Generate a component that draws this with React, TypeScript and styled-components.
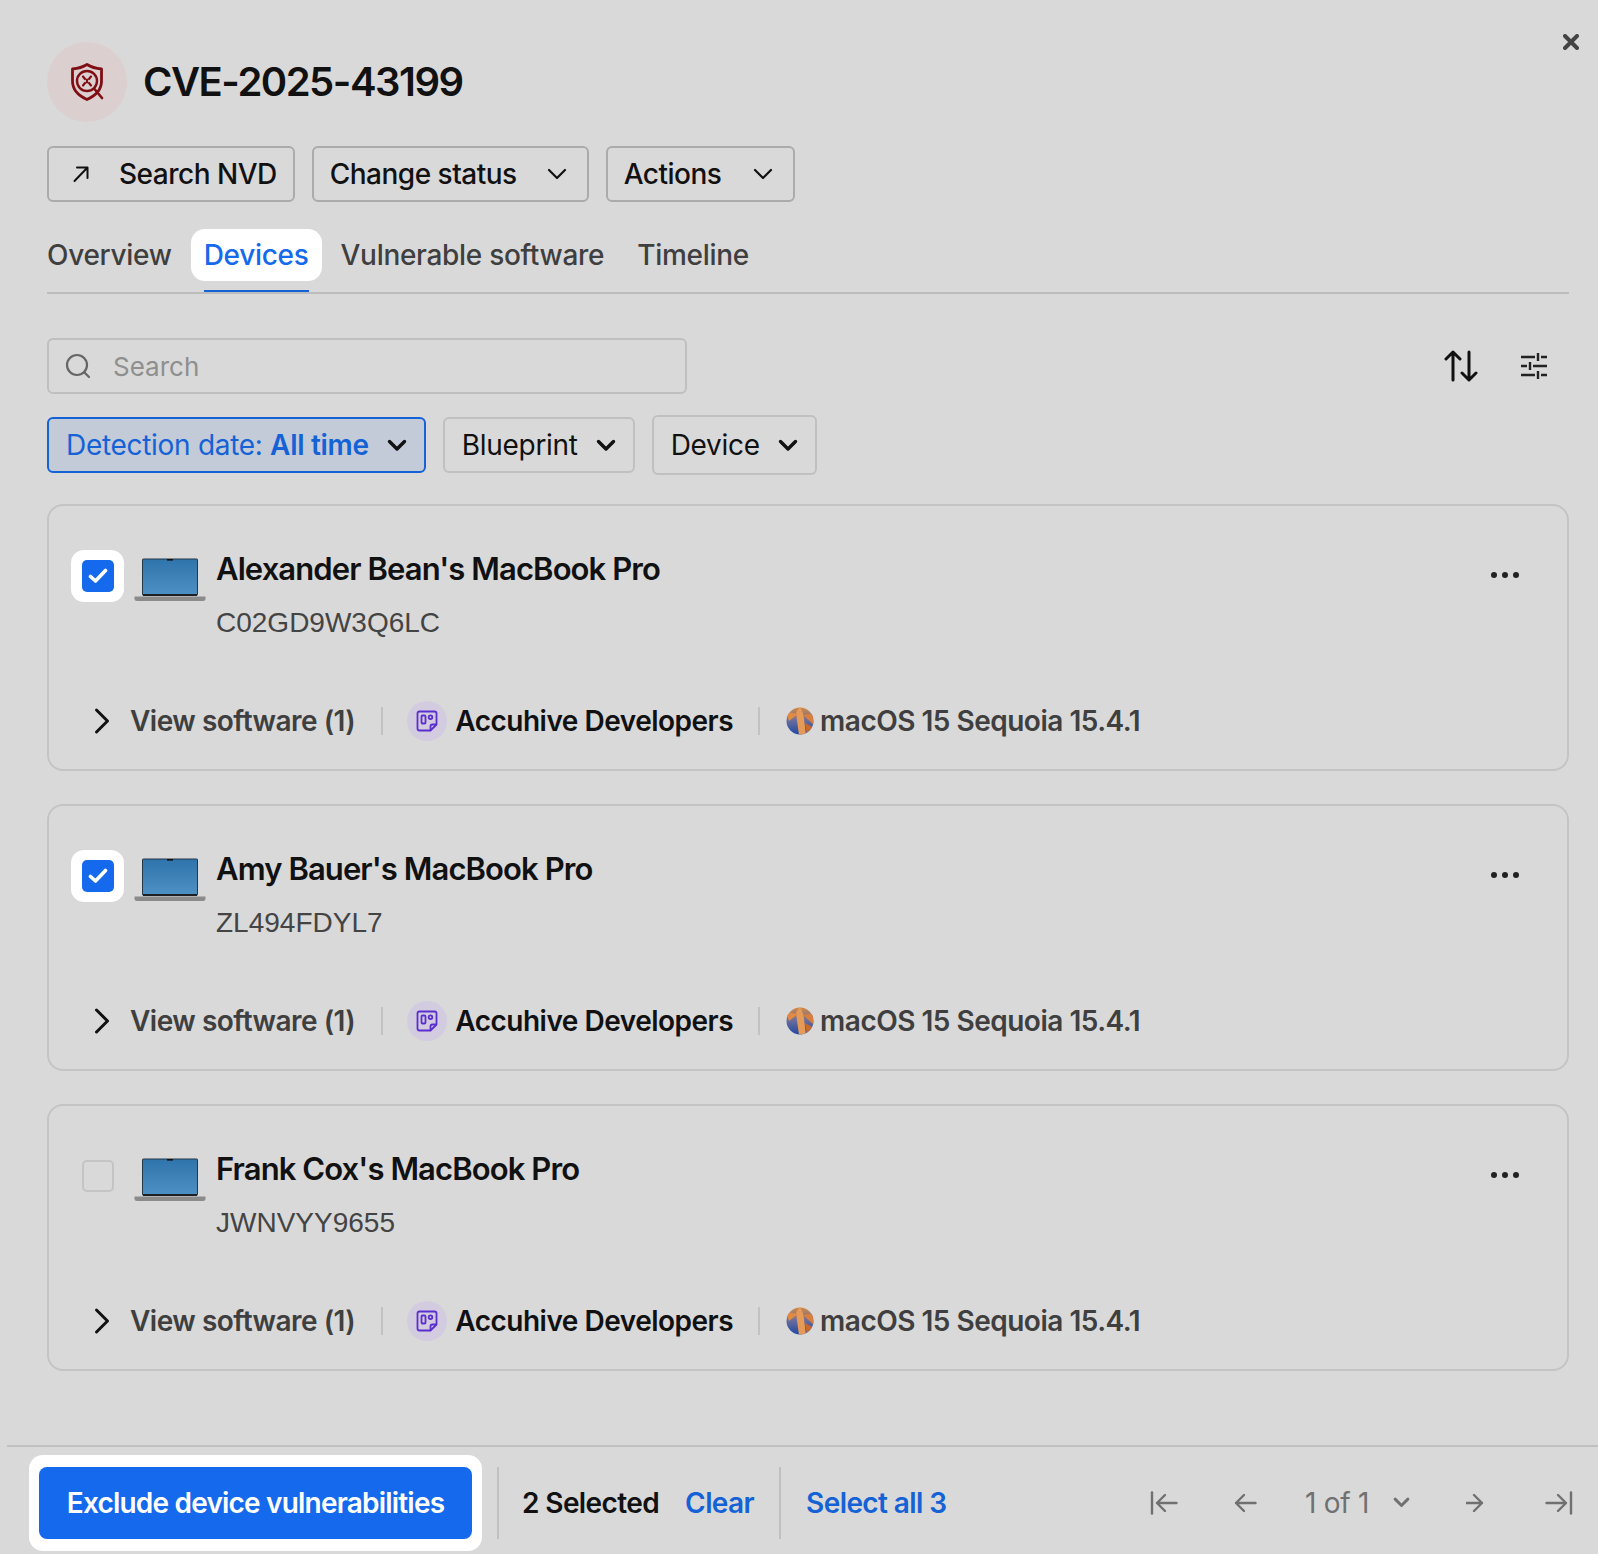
import React from "react";
import styled, { createGlobalStyle } from "styled-components";

const GlobalStyle = createGlobalStyle`
  html, body {
    margin: 0;
    padding: 0;
    background: #d9d9d9;
  }
  * {
    box-sizing: border-box;
  }
`;

const devices = [
  { name: "Alexander Bean's MacBook Pro", serial: "C02GD9W3Q6LC", checked: true },
  { name: "Amy Bauer's MacBook Pro", serial: "ZL494FDYL7", checked: true },
  { name: "Frank Cox's MacBook Pro", serial: "JWNVYY9655", checked: false },
];

function ShieldIcon() {
  return (
    <svg width="40" height="40" viewBox="0 0 40 40" fill="none" stroke="#7f0f14">
      <path d="M20 2.5 C24 5 29 6.5 34.5 7 V19 C34.5 27 29 33.5 20 37.5 C11 33.5 5.5 27 5.5 19 V7 C11 6.5 16 5 20 2.5 Z" strokeWidth="2.8" fill="none" strokeLinejoin="round" />
      <circle cx="20" cy="19" r="10" strokeWidth="2.4" fill="#dccfd0" />
      <path d="M27.5 27 L35 36" strokeWidth="2.6" strokeLinecap="round" />
      <path d="M16 14.5 L18 17 M24 14.5 L22 17 M16 23.5 L18 21 M24 23.5 L22 21 M20 17.5 V20.5" strokeWidth="2.2" strokeLinecap="round" />
    </svg>
  );
}

function CloseIcon() {
  return (
    <svg width="16" height="16" viewBox="0 0 16 16" stroke="#444" strokeWidth="4" strokeLinecap="round">
      <path d="M2 2 L14 14 M14 2 L2 14" />
    </svg>
  );
}

function ExternalIcon() {
  return (
    <svg width="20" height="20" viewBox="0 0 20 20" fill="none" stroke="#111" strokeWidth="2" strokeLinecap="round" strokeLinejoin="round">
      <path d="M3.5 17 L16 4 M6 3.5 H16.5 V14" />
    </svg>
  );
}

function ThinChevron() {
  return (
    <svg width="20" height="12" viewBox="0 0 20 12" fill="none" stroke="#111" strokeWidth="2.2" strokeLinecap="round" strokeLinejoin="round">
      <path d="M2 2 L10 10 L18 2" />
    </svg>
  );
}

function BoldChevron({ color = "#111", width = 20 }: { color?: string; width?: number }) {
  return (
    <svg width={width} height={width * 0.65} viewBox="0 0 20 13" fill="none" stroke={color} strokeWidth="3.4" strokeLinecap="round" strokeLinejoin="round">
      <path d="M2.5 2.5 L10 10 L17.5 2.5" />
    </svg>
  );
}

function SearchIcon() {
  return (
    <svg width="26" height="26" viewBox="0 0 26 26" fill="none" stroke="#666" strokeWidth="2.2" strokeLinecap="round">
      <circle cx="12" cy="12" r="10" />
      <path d="M19.5 19.5 L24 24" />
    </svg>
  );
}

function SortIcon() {
  return (
    <svg width="34" height="32" viewBox="0 0 34 32" fill="none" stroke="#111" strokeWidth="3" strokeLinecap="round" strokeLinejoin="round">
      <path d="M9 30 V2 M2 9 L9 2 L16 9 M25 2 V30 M18 23 L25 30 L32 23" />
    </svg>
  );
}

function SlidersIcon() {
  return (
    <svg width="28" height="28" viewBox="0 0 28 28" fill="none" stroke="#222" strokeWidth="2.4">
      <path d="M1 5 H15 M21 5 H27 M18 1 V9 M1 14 H7 M13 14 H27 M10 10 V18 M1 23 H15 M21 23 H27 M18 19 V27" />
    </svg>
  );
}

function LaptopIcon() {
  return (
    <svg width="72" height="44" viewBox="0 0 72 44" fill="none">
      <defs>
        <linearGradient id="screen" x1="0" y1="0" x2="0" y2="1">
          <stop offset="0" stopColor="#2f74ab" />
          <stop offset="1" stopColor="#4d90c4" />
        </linearGradient>
      </defs>
      <rect x="8" y="0.5" width="56" height="37" rx="1.5" fill="#27374a" />
      <rect x="9" y="1.5" width="54" height="35" fill="url(#screen)" />
      <rect x="33" y="1" width="6" height="1.6" fill="#111" />
      <rect x="9" y="36" width="54" height="2" fill="#1d2126" />
      <path d="M0.5 38.5 H71.5 V41 Q71.5 43 69 43 H3 Q0.5 43 0.5 41 Z" fill="#8b8b8b" />
    </svg>
  );
}

function OrgIcon() {
  return (
    <svg width="22" height="22" viewBox="0 0 22 22" fill="none" stroke="#5a2ed0" strokeWidth="1.8" strokeLinejoin="round">
      <path d="M3.5 1.5 H18.5 Q20.5 1.5 20.5 3.5 V14.5 L14.5 20.5 H3.5 Q1.5 20.5 1.5 18.5 V3.5 Q1.5 1.5 3.5 1.5 Z" />
      <path d="M14.5 20.5 V16.5 Q14.5 14.5 16.5 14.5 H20.5" />
      <rect x="5.5" y="5.5" width="4" height="8" rx="1" />
      <circle cx="14.5" cy="7.2" r="1.8" />
    </svg>
  );
}

function SequoiaIcon() {
  return (
    <svg width="28" height="28" viewBox="0 0 28 28">
      <defs>
        <linearGradient id="sky" x1="0" y1="0" x2="0" y2="1">
          <stop offset="0" stopColor="#d98a3f" />
          <stop offset="0.45" stopColor="#6f6f98" />
          <stop offset="1" stopColor="#1d47a8" />
        </linearGradient>
        <clipPath id="disc">
          <circle cx="14" cy="14" r="13.5" />
        </clipPath>
      </defs>
      <g clipPath="url(#disc)">
        <rect width="28" height="28" fill="url(#sky)" />
        <path d="M14 -1 L10 6 L13 28 H20 L17.5 8 Z" fill="#e69a57" />
        <path d="M0 5 L12 7 L3 14 Z" fill="#e08a45" />
        <path d="M28 6 L17 8 L27 17 Z" fill="#d87f3f" />
        <path d="M19 16 L28 21 V28 H21 Z" fill="#c96a2c" />
      </g>
    </svg>
  );
}

function ArrowIcon({ direction, stop }: { direction: "left" | "right"; stop?: boolean }) {
  const flip = direction === "right" ? "scale(-1 1) translate(-28 0)" : undefined;
  return (
    <svg width={stop ? 28 : 23} height="24" viewBox={stop ? "0 0 28 24" : "5 0 23 24"} fill="none" stroke="#707070" strokeWidth="2.4" strokeLinecap="round" strokeLinejoin="round">
      <g transform={flip}>
        {stop && <path d="M2 1.5 V22.5" />}
        <path d="M26.5 12 H7 M15 4 L7 12 L15 20" />
      </g>
    </svg>
  );
}

const Page = styled.div`
  position: relative;
  display: flex;
  flex-direction: column;
  height: 1554px;
  overflow: hidden;
  background: #d9d9d9;
  color: #111;
  font-family: Inter, "Liberation Sans", sans-serif;
`;

const CloseButton = styled.button`
  position: absolute;
  top: 34px;
  right: 19px;
  display: flex;
  padding: 0;
  border: none;
  background: none;
`;

const Body = styled.div`
  display: flex;
  flex-direction: column;
  padding: 42px 29px 0 47px;
`;

const Header = styled.div`
  display: flex;
  align-items: center;
  gap: 16px;
`;

const Avatar = styled.div`
  display: flex;
  align-items: center;
  justify-content: center;
  width: 80px;
  height: 80px;
  border-radius: 50%;
  background: #dccfd0;
`;

const Title = styled.h1`
  margin: 0;
  font-size: 40px;
  font-weight: 600;
  letter-spacing: -1.5px;
  line-height: 48px;
`;

const ActionRow = styled.div`
  display: flex;
  gap: 17px;
  margin-top: 24px;
`;

const ActionButton = styled.button<{ $gap: number; $left: number; $right: number }>`
  display: flex;
  align-items: center;
  gap: ${(p) => p.$gap}px;
  height: 56px;
  padding: 0 ${(p) => p.$right}px 0 ${(p) => p.$left}px;
  border: 2px solid #ababab;
  border-radius: 6px;
  background: none;
  color: #111;
  font-family: inherit;
  font-size: 28px;
  font-weight: 500;
  letter-spacing: -0.5px;
`;

const TabBar = styled.div`
  display: flex;
  align-items: flex-start;
  height: 65px;
  margin-top: 27px;
  border-bottom: 2px solid #bcbcbc;
`;

const Tab = styled.div<{ $active?: boolean; $ml: number }>`
  position: relative;
  margin-left: ${(p) => p.$ml}px;
  padding: 0 ${(p) => (p.$active ? 13 : 0)}px;
  height: 52px;
  line-height: 52px;
  border-radius: 14px;
  background: ${(p) => (p.$active ? "#fff" : "transparent")};
  color: ${(p) => (p.$active ? "#1569ec" : "#3f3f3f")};
  font-size: 28px;
  font-weight: 500;
  letter-spacing: -0.3px;

  ${(p) =>
    p.$active &&
    `&::after {
      content: "";
      position: absolute;
      left: 13px;
      right: 13px;
      bottom: -11px;
      height: 2px;
      background: #1462d6;
    }`}
`;

const Toolbar = styled.div`
  display: flex;
  align-items: center;
  justify-content: space-between;
  margin-top: 44px;
`;

const SearchBox = styled.div`
  display: flex;
  align-items: center;
  gap: 22px;
  width: 640px;
  height: 56px;
  padding: 0 16px;
  border: 2px solid #bfbfbf;
  border-radius: 6px;
  color: #8f8f8f;
  font-size: 26px;
`;

const ToolIcons = styled.div`
  display: flex;
  align-items: center;
  gap: 42px;
  margin-right: -8px;
  padding-right: 29px;
`;

const FilterRow = styled.div`
  display: flex;
  align-items: center;
  gap: 17px;
  margin-top: 21px;
  height: 60px;
`;

const FilterChip = styled.div<{ $active?: boolean; $tall?: boolean }>`
  display: flex;
  align-items: center;
  gap: 18px;
  height: ${(p) => (p.$tall ? 60 : 56)}px;
  padding: 0 17px;
  border: 2px solid ${(p) => (p.$active ? "#1462d6" : "#c0c0c0")};
  border-radius: 6px;
  background: ${(p) => (p.$active ? "#c3cad8" : "transparent")};
  color: ${(p) => (p.$active ? "#1462d6" : "#111")};
  font-size: 28px;
  letter-spacing: -0.3px;

  b {
    font-weight: 600;
  }
`;

const CardList = styled.div`
  display: flex;
  flex-direction: column;
  gap: 33px;
  margin-top: 29px;
`;

const Card = styled.div`
  display: flex;
  flex-direction: column;
  height: 267px;
  padding: 0 48px 0 22px;
  border: 2px solid #c4c4c4;
  border-radius: 16px;
`;

const CardTop = styled.div`
  display: flex;
  align-items: flex-start;
  height: 195px;
  padding-top: 44px;
`;

const CheckWrap = styled.div<{ $checked: boolean }>`
  display: flex;
  align-items: center;
  justify-content: center;
  flex: none;
  width: 53px;
  height: 52px;
  border-radius: 13px;
  background: ${(p) => (p.$checked ? "#fff" : "transparent")};
`;

const CheckBox = styled.div<{ $checked: boolean }>`
  display: flex;
  align-items: center;
  justify-content: center;
  width: 32px;
  height: 32px;
  border-radius: 5px;
  border: ${(p) => (p.$checked ? "none" : "2px solid #c4c4c4")};
  background: ${(p) => (p.$checked ? "#1569ec" : "transparent")};
`;

const LaptopSlot = styled.div`
  display: flex;
  flex: none;
  width: 92px;
  padding: 8px 0 0 10px;
`;

const Info = styled.div`
  display: flex;
  flex-direction: column;
  flex: 1;
`;

const DeviceName = styled.div`
  margin-top: -5px;
  height: 48px;
  font-size: 31px;
  line-height: 48px;
  font-weight: 600;
  letter-spacing: -0.9px;
`;

const Serial = styled.div`
  margin-top: 12px;
  color: #444;
  font-family: "Liberation Sans", Arial, sans-serif;
  font-size: 28px;
  line-height: 36px;
`;

const Dots = styled.div`
  display: flex;
  gap: 5px;
  margin-top: 22px;

  span {
    width: 6px;
    height: 6px;
    border-radius: 50%;
    background: #222;
  }
`;

const CardBottom = styled.div`
  display: flex;
  align-items: center;
  height: 40px;
  padding-left: 23px;
`;

const Caret = styled.svg`
  flex: none;
  width: 16px;
  height: 28px;
  margin-right: 20px;
`;

const MetaLabel = styled.span<{ $muted?: boolean }>`
  color: ${(p) => (p.$muted ? "#3f3f3f" : "#111")};
  font-size: 28px;
  font-weight: 600;
  letter-spacing: -0.5px;
`;

const MetaDivider = styled.span<{ $ml: number; $mr: number }>`
  flex: none;
  width: 2px;
  height: 28px;
  margin: 0 ${(p) => p.$mr}px 0 ${(p) => p.$ml}px;
  background: #c2c2c2;
`;

const OrgAvatar = styled.div`
  display: flex;
  align-items: center;
  justify-content: center;
  flex: none;
  width: 40px;
  height: 40px;
  margin-right: 8px;
  border-radius: 50%;
  background: #d3cbdf;
`;

const OsSlot = styled.div`
  display: flex;
  flex: none;
  margin-right: 6px;
`;

const Footer = styled.div`
  display: flex;
  align-items: center;
  margin: auto 0 0 7px;
  height: 109px;
  padding: 0 25px 3px 22px;
  border-top: 2px solid #c0c0c0;
`;

const SpotlightBox = styled.div`
  display: flex;
  flex: none;
  margin: 8px 0 0 0;
  padding: 12px 10px;
  border-radius: 14px;
  background: #fff;
`;

const PrimaryButton = styled.button`
  width: 433px;
  height: 72px;
  border: none;
  border-radius: 8px;
  background: #1569ec;
  color: #fff;
  font-family: inherit;
  font-size: 28px;
  font-weight: 600;
  letter-spacing: -0.8px;
`;

const FootDivider = styled.span<{ $ml: number; $mr: number }>`
  flex: none;
  width: 2px;
  height: 72px;
  margin: 8px ${(p) => p.$mr}px 0 ${(p) => p.$ml}px;
  background: #c0c0c0;
`;

const FootText = styled.span<{ $link?: boolean; $ml?: number }>`
  margin: 8px 0 0 ${(p) => p.$ml || 0}px;
  color: ${(p) => (p.$link ? "#1462d6" : "#111")};
  font-size: 28px;
  font-weight: 600;
  letter-spacing: -0.6px;
`;

const Pager = styled.div`
  display: flex;
  align-items: center;
  gap: 0;
  margin: 8px 0 0 auto;
  color: #707070;
  font-size: 28px;
`;

const PagerButton = styled.span<{ $ml: number }>`
  display: flex;
  margin-left: ${(p) => p.$ml}px;
`;

const PageLabel = styled.span<{ $ml: number }>`
  margin-left: ${(p) => p.$ml}px;
  letter-spacing: -0.3px;
`;

function DeviceCard({ name, serial, checked }: { name: string; serial: string; checked: boolean }) {
  return (
    <Card>
      <CardTop>
        <CheckWrap $checked={checked}>
          <CheckBox $checked={checked}>
            {checked && (
              <svg width="20" height="16" viewBox="0 0 20 16" fill="none" stroke="#fff" strokeWidth="3.6" strokeLinecap="round" strokeLinejoin="round">
                <path d="M2.5 8.5 L7.5 13 L17.5 2.5" />
              </svg>
            )}
          </CheckBox>
        </CheckWrap>
        <LaptopSlot>
          <LaptopIcon />
        </LaptopSlot>
        <Info>
          <DeviceName>{name}</DeviceName>
          <Serial>{serial}</Serial>
        </Info>
        <Dots>
          <span />
          <span />
          <span />
        </Dots>
      </CardTop>
      <CardBottom>
        <Caret viewBox="0 0 16 28" fill="none" stroke="#111" strokeWidth="3" strokeLinecap="round" strokeLinejoin="round">
          <path d="M2.5 3 L13.5 14 L2.5 25" />
        </Caret>
        <MetaLabel $muted>View software (1)</MetaLabel>
        <MetaDivider $ml={26} $mr={24} />
        <OrgAvatar>
          <OrgIcon />
        </OrgAvatar>
        <MetaLabel>Accuhive Developers</MetaLabel>
        <MetaDivider $ml={25} $mr={26} />
        <OsSlot>
          <SequoiaIcon />
        </OsSlot>
        <MetaLabel $muted>macOS 15 Sequoia 15.4.1</MetaLabel>
      </CardBottom>
    </Card>
  );
}

export default function App() {
  return (
    <Page>
      <GlobalStyle />
      <CloseButton aria-label="Close">
        <CloseIcon />
      </CloseButton>
      <Body>
        <Header>
          <Avatar>
            <ShieldIcon />
          </Avatar>
          <Title>CVE-2025-43199</Title>
        </Header>
        <ActionRow>
          <ActionButton $gap={28} $left={22} $right={16}>
            <ExternalIcon />
            Search NVD
          </ActionButton>
          <ActionButton $gap={30} $left={16} $right={20}>
            Change status
            <ThinChevron />
          </ActionButton>
          <ActionButton $gap={32} $left={16} $right={20}>
            Actions
            <ThinChevron />
          </ActionButton>
        </ActionRow>
        <TabBar>
          <Tab $ml={0}>Overview</Tab>
          <Tab $ml={19} $active>
            Devices
          </Tab>
          <Tab $ml={19}>Vulnerable software</Tab>
          <Tab $ml={33}>Timeline</Tab>
        </TabBar>
        <Toolbar>
          <SearchBox>
            <SearchIcon />
            Search
          </SearchBox>
          <ToolIcons>
            <SortIcon />
            <SlidersIcon />
          </ToolIcons>
        </Toolbar>
        <FilterRow>
          <FilterChip $active>
            <span>
              Detection date: <b>All time</b>
            </span>
            <BoldChevron color="#111" />
          </FilterChip>
          <FilterChip>
            Blueprint
            <BoldChevron />
          </FilterChip>
          <FilterChip $tall>
            Device
            <BoldChevron />
          </FilterChip>
        </FilterRow>
        <CardList>
          {devices.map((d) => (
            <DeviceCard key={d.serial} {...d} />
          ))}
        </CardList>
      </Body>
      <Footer>
        <SpotlightBox>
          <PrimaryButton>Exclude device vulnerabilities</PrimaryButton>
        </SpotlightBox>
        <FootDivider $ml={15} $mr={23} />
        <FootText>2 Selected</FootText>
        <FootText $link $ml={26}>
          Clear
        </FootText>
        <FootDivider $ml={25} $mr={25} />
        <FootText $link>Select all 3</FootText>
        <Pager>
          <PagerButton $ml={0}>
            <ArrowIcon direction="left" stop />
          </PagerButton>
          <PagerButton $ml={56}>
            <ArrowIcon direction="left" />
          </PagerButton>
          <PageLabel $ml={48}>1 of 1</PageLabel>
          <PagerButton $ml={24}>
            <BoldChevron color="#707070" width={17} />
          </PagerButton>
          <PagerButton $ml={56}>
            <ArrowIcon direction="right" />
          </PagerButton>
          <PagerButton $ml={56}>
            <ArrowIcon direction="right" stop />
          </PagerButton>
        </Pager>
      </Footer>
    </Page>
  );
}
